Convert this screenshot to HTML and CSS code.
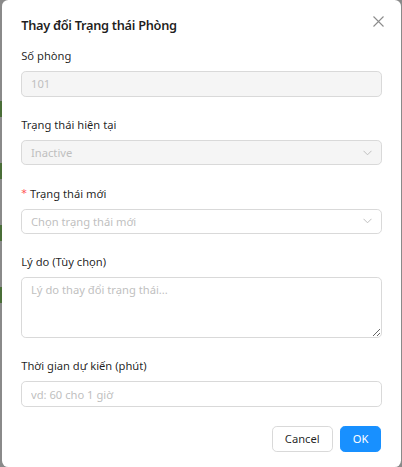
FILE: index.html
```html
<!DOCTYPE html>
<html lang="vi">
<head>
<meta charset="utf-8">
<title>Thay đổi Trạng thái Phòng</title>
<link rel="stylesheet" href="styles.css">
</head>
<body>
<div class="backdrop">
  <span class="bg-mark m1"></span>
  <span class="bg-mark m2"></span>
  <span class="bg-mark m3"></span>
  <span class="bg-mark m4"></span>
</div>
<div class="modal">
  <button class="close" aria-label="Close">
    <svg width="11" height="11" viewBox="0 0 11 11"><path d="M0.5 0.5 L10.5 10.5 M10.5 0.5 L0.5 10.5" stroke="#8c8c8c" stroke-width="1.1" fill="none"/></svg>
  </button>
  <div class="title">Thay đổi Trạng thái Phòng</div>
  <form class="form">
    <div class="item">
      <label class="label">Số phòng</label>
      <input class="input disabled" value="101" disabled>
    </div>
    <div class="item">
      <label class="label">Trạng thái hiện tại</label>
      <div class="select disabled">
        <span class="sel-text muted">Inactive</span>
        <svg class="arrow" width="9" height="6" viewBox="0 0 9 6"><path d="M0.5 0.8 L4.5 4.8 L8.5 0.8" stroke="#bfbfbf" stroke-width="1" fill="none"/></svg>
      </div>
    </div>
    <div class="item">
      <label class="label"><span class="req">*</span>Trạng thái mới</label>
      <div class="select">
        <span class="sel-text muted">Chọn trạng thái mới</span>
        <svg class="arrow" width="9" height="6" viewBox="0 0 9 6"><path d="M0.5 0.8 L4.5 4.8 L8.5 0.8" stroke="#bfbfbf" stroke-width="1" fill="none"/></svg>
      </div>
    </div>
    <div class="item">
      <label class="label">Lý do (Tùy chọn)</label>
      <textarea class="textarea" placeholder="Lý do thay đổi trạng thái..."></textarea>
    </div>
    <div class="item">
      <label class="label">Thời gian dự kiến (phút)</label>
      <input class="input" placeholder="vd: 60 cho 1 giờ">
    </div>
  </form>
  <div class="footer">
    <button class="btn">Cancel</button>
    <button class="btn primary">OK</button>
  </div>
</div>
</body>
</html>
```
FILE: styles.css
```css
* { box-sizing: border-box; }
html, body { margin: 0; padding: 0; }
body {
  width: 402px;
  height: 467px;
  overflow: hidden;
  background: #8a8a8a;
  display: flex;
  font-family: "Noto Sans", "Open Sans", sans-serif;
  color: rgba(0,0,0,0.88);
}
.backdrop {
  width: 2px;
  flex: none;
  display: flex;
  flex-direction: column;
  padding-top: 101px;
}
.bg-mark {
  display: block;
  width: 2px;
  height: 16px;
  background: #4a6e38;
  margin-bottom: 46px;
}
.modal {
  position: relative;
  width: 399px;
  height: 467px;
  flex: none;
  background: #fff;
  border-radius: 6.4px;
  padding: 16px 19.2px 16px;
  display: flex;
  flex-direction: column;
}
.close {
  position: absolute;
  top: 13px;
  right: 14px;
  width: 17.6px;
  height: 17.6px;
  border: 0;
  background: transparent;
  padding: 0;
  display: flex;
  align-items: center;
  justify-content: center;
}
.title {
  font-size: 12.8px;
  font-weight: 600;
  letter-spacing: -0.3px;
  line-height: 19.2px;
  margin-bottom: 11.8px;
}
.form { display: flex; flex-direction: column; }
.item { display: flex; flex-direction: column; margin-bottom: 19.2px; }
.label {
  font-size: 11.2px;
  line-height: 17.6px;
  padding-bottom: 6.4px;
  display: flex;
  align-items: center;
}
.req {
  color: #ff4d4f;
  margin-right: 3.2px;
  font-family: SimSun, "DejaVu Sans", sans-serif;
  font-size: 11.2px;
}
.input, .select, .textarea {
  width: 100%;
  height: 25.6px;
  border: 0.8px solid #d9d9d9;
  border-radius: 4.8px;
  background: #fff;
  font-family: inherit;
  font-size: 11.2px;
  color: rgba(0,0,0,0.88);
  padding: 0 8.8px;
  outline: none;
}
.input::placeholder, .textarea::placeholder { color: #bfbfbf; }
.disabled {
  background: #f5f5f5;
  color: #bfbfbf;
}
.input.disabled { -webkit-text-fill-color: #bfbfbf; }
.select {
  display: flex;
  align-items: center;
  justify-content: space-between;
  padding-right: 9px;
}
.sel-text { font-size: 11.2px; }
.muted { color: #bfbfbf; }
.arrow { flex: none; }
.textarea {
  height: 60.8px;
  padding: 3.2px 8.8px;
  line-height: 17.6px;
  resize: vertical;
  display: block;
}
.footer {
  display: flex;
  justify-content: flex-end;
  gap: 7px;
  padding-right: 0.5px;
}
.btn {
  height: 25.6px;
  padding: 0 12px;
  border: 0.8px solid #d9d9d9;
  border-radius: 4.8px;
  background: #fff;
  font-family: inherit;
  font-size: 11.2px;
  color: rgba(0,0,0,0.88);
}
.btn.primary {
  background: #1890ff;
  border-color: #1890ff;
  color: #fff;
}
```
